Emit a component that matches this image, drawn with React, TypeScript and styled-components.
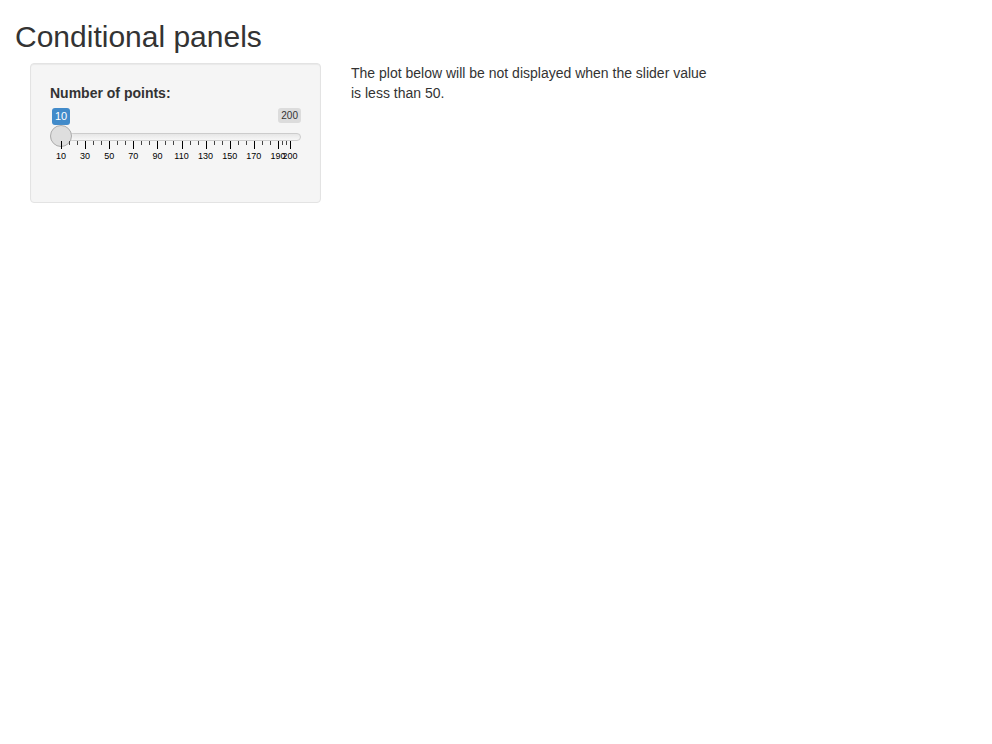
import React from "react";
import styled, { createGlobalStyle } from "styled-components";

const Global = createGlobalStyle`
  html, body { margin: 0; padding: 0; background: #fff; }
  body {
    font-family: "Liberation Sans", Arial, sans-serif;
    font-size: 14px;
    line-height: 1.42857143;
    color: #333;
  }
  * { box-sizing: border-box; }
`;

const Page = styled.div`
  padding: 0 15px;
`;

const Title = styled.h2`
  font-size: 30px;
  font-weight: 500;
  line-height: 1.1;
  margin: 20px 0 10px;
`;

const Row = styled.div`
  display: flex;
  align-items: flex-start;
`;

const Sidebar = styled.div`
  width: 321px;
  padding: 0 15px;
  flex: none;
`;

const Main = styled.div`
  padding: 0 15px;
  flex: 1;
`;

const Well = styled.div`
  min-height: 20px;
  padding: 19px;
  margin-bottom: 20px;
  background: #f5f5f5;
  border: 1px solid #e3e3e3;
  border-radius: 4px;
  box-shadow: inset 0 1px 1px rgba(0, 0, 0, 0.05);
`;

const FormGroup = styled.div`
  margin-bottom: 15px;
`;

const Label = styled.label`
  display: inline-block;
  font-weight: bold;
  margin-bottom: 5px;
`;

const Irs = styled.div`
  display: flex;
  flex-direction: column;
  height: 60px;
  width: 100%;
`;

const BadgeRow = styled.div`
  display: flex;
  justify-content: space-between;
  align-items: flex-start;
  height: 17px;
  padding-left: 2px;
`;

const Badge = styled.span<{ $tone: "value" | "limit" }>`
  padding: 1px 3px;
  border-radius: 3px;
  line-height: 1.333;
  white-space: nowrap;
  font-size: ${(p) => (p.$tone === "value" ? "11px" : "10px")};
  color: ${(p) => (p.$tone === "value" ? "#fff" : "#333")};
  background: ${(p) => (p.$tone === "value" ? "#428bca" : "rgba(0,0,0,0.1)")};
`;

const Track = styled.div`
  position: relative;
  display: flex;
  align-items: center;
  height: 22px;
  padding-top: 2px;
`;

const Line = styled.div`
  flex: 1;
  height: 8px;
  border: 1px solid #cccccc;
  border-radius: 8px;
  background: linear-gradient(to bottom, #dedede -50%, #ffffff 150%);
`;

const Handle = styled.div`
  position: absolute;
  top: 0;
  left: 0;
  width: 22px;
  height: 22px;
  border: 1px solid #ababab;
  border-radius: 22px;
  background: #dedede;
  box-shadow: 1px 1px 3px rgba(255, 255, 255, 0.3);
`;

const Grid = styled.div`
  position: relative;
  margin: -6px 11px 0;
  height: 27px;
`;

const Pol = styled.span<{ $small?: boolean }>`
  position: absolute;
  top: 0;
  width: 1px;
  height: ${(p) => (p.$small ? "4px" : "8px")};
  background: ${(p) => (p.$small ? "#444" : "#000")};
`;

const GridText = styled.span`
  position: absolute;
  top: 11px;
  font-size: 9px;
  line-height: 9px;
  color: #000;
  white-space: nowrap;
  transform: translateX(-50%);
`;

const Text = styled.p`
  margin: 0 0 10px;
  max-width: 363px;
`;

const MIN = 10;
const MAX = 200;
const bigs = [10, 30, 50, 70, 90, 110, 130, 150, 170, 190, 200];
const pct = (v: number) => ((v - MIN) / (MAX - MIN)) * 100;

function Slider() {
  const pols: React.ReactNode[] = [];
  bigs.forEach((v, i) => {
    if (i > 0) {
      const prev = bigs[i - 1];
      const w = (v - prev) / 3;
      for (let z = 1; z <= 2; z++) {
        const sv = prev + w * z;
        pols.push(<Pol key={`s${v}-${z}`} $small style={{ left: `${pct(sv)}%` }} />);
      }
    }
    pols.push(<Pol key={`b${v}`} style={{ left: `${pct(v)}%` }} />);
    pols.push(
      <GridText key={`t${v}`} style={{ left: `${pct(v)}%` }}>
        {v}
      </GridText>
    );
  });
  return (
    <Irs>
      <BadgeRow>
        <Badge $tone="value">10</Badge>
        <Badge $tone="limit">200</Badge>
      </BadgeRow>
      <Track>
        <Line />
        <Handle />
      </Track>
      <Grid>{pols}</Grid>
    </Irs>
  );
}

export default function App() {
  return (
    <>
      <Global />
      <Page>
        <Title>Conditional panels</Title>
        <Row>
          <Sidebar>
            <Well>
              <FormGroup>
                <Label>Number of points:</Label>
                <Slider />
              </FormGroup>
            </Well>
          </Sidebar>
          <Main>
            <Text>
              The plot below will be not displayed when the slider value is less than 50.
            </Text>
          </Main>
        </Row>
      </Page>
    </>
  );
}
